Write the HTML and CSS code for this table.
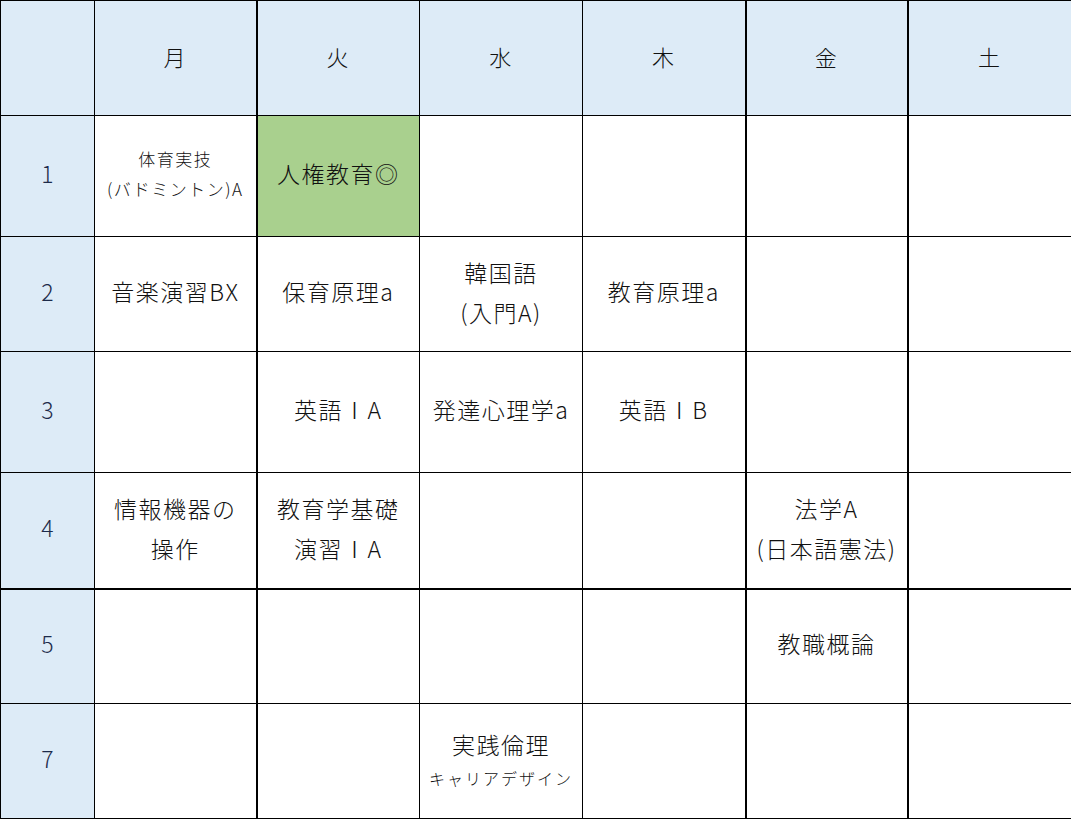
FILE: index.html
```html
<!DOCTYPE html>
<html lang="ja">
<head>
<meta charset="utf-8">
<title>時間割</title>
<link rel="stylesheet" href="styles.css">
</head>
<body>
<table class="tt">
  <colgroup>
    <col class="c0"><col class="c1"><col class="c2"><col class="c3"><col class="c4"><col class="c5"><col class="c6">
  </colgroup>
  <tr class="r-head">
    <td class="hd"></td>
    <td class="hd">月</td>
    <td class="hd thick-l">火</td>
    <td class="hd">水</td>
    <td class="hd">木</td>
    <td class="hd thick-l">金</td>
    <td class="hd thick-l">土</td>
  </tr>
  <tr class="r-a">
    <td class="per">1</td>
    <td><div class="sm">体育実技</div><div class="sm">(バドミントン)A</div></td>
    <td class="thick-l green">人権教育◎</td>
    <td></td>
    <td></td>
    <td class="thick-l"></td>
    <td class="thick-l"></td>
  </tr>
  <tr class="r-b">
    <td class="per">2</td>
    <td>音楽演習BX</td>
    <td class="thick-l">保育原理a</td>
    <td><div class="ln">韓国語</div><div class="ln">(入門A)</div></td>
    <td>教育原理a</td>
    <td class="thick-l"></td>
    <td class="thick-l"></td>
  </tr>
  <tr class="r-a">
    <td class="per">3</td>
    <td></td>
    <td class="thick-l">英語ⅠA</td>
    <td>発達心理学a</td>
    <td>英語ⅠB</td>
    <td class="thick-l"></td>
    <td class="thick-l"></td>
  </tr>
  <tr class="r-c thick-b">
    <td class="per">4</td>
    <td><div class="ln">情報機器の</div><div class="ln">操作</div></td>
    <td class="thick-l"><div class="ln">教育学基礎</div><div class="ln">演習ⅠA</div></td>
    <td></td>
    <td></td>
    <td class="thick-l"><div class="ln">法学A</div><div class="ln">(日本語憲法)</div></td>
    <td class="thick-l"></td>
  </tr>
  <tr class="r-b">
    <td class="per">5</td>
    <td></td>
    <td class="thick-l"></td>
    <td></td>
    <td></td>
    <td class="thick-l">教職概論</td>
    <td class="thick-l"></td>
  </tr>
  <tr class="r-b">
    <td class="per">7</td>
    <td></td>
    <td class="thick-l"></td>
    <td class="nopad"><div class="ln2">実践倫理</div><div class="sm2">キャリアデザイン</div></td>
    <td></td>
    <td class="thick-l"></td>
    <td class="thick-l"></td>
  </tr>
</table>
</body>
</html>
```

FILE: styles.css
```css
html, body {
  margin: 0;
  padding: 0;
  background: #ffffff;
}
body {
  font-family: "Noto Sans CJK JP", "Noto Sans", sans-serif;
  color: #111111;
  width: 1071px;
  height: 820px;
  overflow: hidden;
}
.tt {
  border-collapse: collapse;
  table-layout: fixed;
  width: 1071px;
}
.c0 { width: 94px; }
.c1 { width: 162px; }
.c2 { width: 163px; }
.c3 { width: 163px; }
.c4 { width: 163px; }
.c5 { width: 162px; }
.c6 { width: 164px; }

.tt td {
  border: 1px solid #000000;
  padding: 0 0 5px 0;
  text-align: center;
  vertical-align: middle;
  font-size: 23px;
  font-weight: 300;
  line-height: 1.2;
  white-space: nowrap;
  letter-spacing: 1.5px;
}
.tt td.nopad { padding: 0 0 1px 0; }
.tt td.thick-l { border-left: 2px solid #000000; }
.thick-b td { border-bottom: 2px solid #000000; }

.r-head { height: 115px; }
.r-a { height: 121px; }
.r-b { height: 115px; }
.r-c { height: 116px; }

.tt td.hd {
  background: #ddebf7;
  font-size: 22px;
  padding-bottom: 4px;
}
.tt td.per {
  background: #ddebf7;
  color: #1c2a4a;
  font-size: 23px;
  letter-spacing: 0;
}
.tt td.green { background: #a9d08e; }

.sm {
  font-size: 17px;
  line-height: 30px;
  letter-spacing: 1.5px;
}
.ln {
  line-height: 40px;
}
.ln2 {
  line-height: 34px;
}
.sm2 {
  font-size: 16px;
  line-height: 34px;
  letter-spacing: 2px;
}
```
